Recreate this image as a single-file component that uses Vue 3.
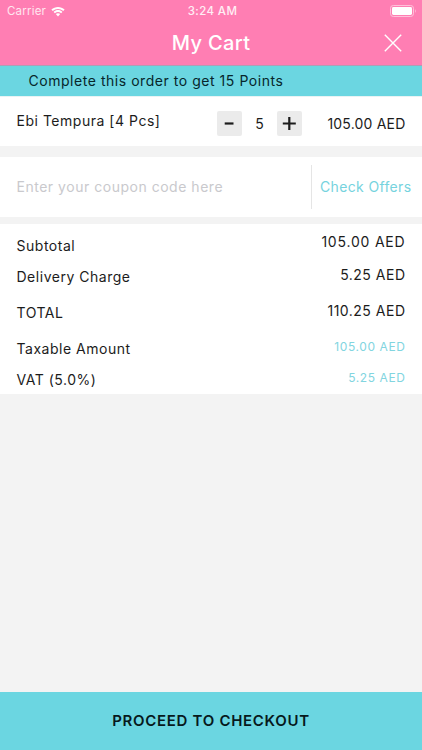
<template>
  <div class="cart">
    <header class="header">
      <div class="status">
        <div class="carrier">
          <span>Carrier</span>
          <svg class="wifi" viewBox="0 0 14 11">
            <path d="M0.4 3.6C4.1 0 9.9 0 13.6 3.6L12.3 5C9.2 2.2 4.8 2.2 1.7 5Z" />
            <path d="M2.6 5.9C5.1 3.5 8.9 3.5 11.4 5.9L10.1 7.3C8.3 5.7 5.7 5.7 3.9 7.3Z" />
            <path d="M4.8 8.1C6.1 7 7.9 7 9.2 8.1L7 10.5Z" />
          </svg>
        </div>
        <span class="time">3:24 AM</span>
        <svg class="battery" viewBox="0 0 27 12">
          <rect x="0.5" y="0.5" width="23" height="11" rx="2.8" class="battery-case" />
          <rect x="2" y="2" width="20" height="8" rx="1.4" fill="#fff" />
          <path d="M25 4.2C26.3 4.8 26.3 7.2 25 7.8Z" class="battery-cap" />
        </svg>
      </div>
      <div class="title-bar">
        <h1 class="title">My Cart</h1>
        <button class="close" aria-label="Close">
          <svg viewBox="0 0 18 18">
            <path d="M0.8 0.8L17.2 17.2M17.2 0.8L0.8 17.2" />
          </svg>
        </button>
      </div>
    </header>

    <div class="points"><span>Complete this order to get 15 Points</span></div>

    <section class="item">
      <span class="item-name">Ebi Tempura [4 Pcs]</span>
      <div class="counter">
        <button class="step" aria-label="Less" @click="decrease">
          <svg viewBox="0 0 25 25"><path d="M7.7 12.5H16.5" /></svg>
        </button>
        <span class="count">{{ count }}</span>
        <button class="step" aria-label="More" @click="count++">
          <svg viewBox="0 0 25 25"><path d="M5.8 12.5H18.8M12.3 6V19" /></svg>
        </button>
      </div>
      <span class="item-price">{{ money(subtotal) }}</span>
    </section>

    <section class="coupon">
      <input v-model="coupon" class="coupon-input" placeholder="Enter your coupon code here" />
      <button class="offers"><span>Check Offers</span></button>
    </section>

    <section class="summary">
      <div v-for="row in rows" :key="row.name" class="row" :class="row.name">
        <span class="label">{{ row.label }}</span>
        <span class="amount">{{ money(row.value) }}</span>
      </div>
    </section>

    <button class="checkout"><span>PROCEED TO CHECKOUT</span></button>
  </div>
</template>

<script setup>
  import { computed, ref } from 'vue'

  const price = 21
  const delivery = 5.25
  const count = ref(5)
  const coupon = ref('')

  const subtotal = computed(() => price * count.value)

  const rows = computed(() => [
    { name: 'subtotal', label: 'Subtotal', value: subtotal.value },
    { name: 'delivery', label: 'Delivery Charge', value: delivery },
    { name: 'total', label: 'TOTAL', value: subtotal.value + delivery },
    { name: 'taxable', label: 'Taxable Amount', value: subtotal.value },
    { name: 'vat', label: 'VAT (5.0%)', value: subtotal.value * 0.05 },
  ])

  function money(value) {
    return value.toFixed(2) + ' AED'
  }

  function decrease() {
    if (count.value > 1) count.value--
  }
</script>

<style>
  body {
    background-color: #f3f3f3;
  }
</style>

<style scoped>
  .cart {
    display: flex;
    flex-direction: column;
    height: 100vh;
    background-color: #f3f3f3;
    font-family: Inter, "Liberation Sans", sans-serif;
    font-size: 14px;
    line-height: 20px;
    color: #1c1c1c;
    white-space: nowrap;
    overflow: hidden;
  }

  button {
    padding: 0;
    border: none;
    background: none;
    font: inherit;
    color: inherit;
    cursor: pointer;
  }

  svg {
    display: block;
  }

  .header {
    box-sizing: border-box;
    height: 66px;
    background-color: #ff7eb3;
    border-bottom: 1px solid #b09db5;
    color: #fff;
  }

  .status {
    display: grid;
    grid-template-columns: 1fr auto 1fr;
    align-items: center;
    height: 22px;
    padding: 0 5px 0 7px;
    font-size: 11.5px;
  }

  .carrier {
    display: flex;
    align-items: center;
    gap: 5px;
    color: #ffe6f0;
    letter-spacing: 0.2px;
  }

  .wifi {
    width: 14px;
    height: 11px;
    fill: #fff;
  }

  .time {
    margin-left: 1px;
    font-weight: 500;
    letter-spacing: 0.4px;
    color: #ffeef5;
  }

  .battery {
    justify-self: end;
    width: 27px;
    height: 12px;
  }

  .battery-case {
    fill: none;
    stroke: #ffc0da;
  }

  .battery-cap {
    fill: #ffb3d2;
  }

  .title-bar {
    display: grid;
    grid-template-columns: 1fr auto 1fr;
    align-items: center;
    height: 41px;
  }

  .title {
    grid-column: 2;
    margin: 0;
    font-size: 20px;
    font-weight: 550;
    letter-spacing: 0.35px;
  }

  .close {
    justify-self: end;
    width: 18px;
    height: 18px;
    margin-right: 20px;
  }

  .close path {
    fill: none;
    stroke: #fff;
    stroke-width: 1.4;
  }

  .points {
    height: 30px;
    padding-left: 28.5px;
    background-color: #6bd6e1;
    line-height: 30px;
    letter-spacing: 0.54px;
    color: #07262b;
  }

  .item {
    box-sizing: border-box;
    display: flex;
    height: 50px;
    padding: 0 16.5px;
    border-top: 1px solid #e9f3f4;
    background-color: #fff;
  }

  .item-name {
    width: 200.5px;
    margin-top: 14px;
    letter-spacing: 0.52px;
  }

  .counter {
    display: flex;
    align-items: center;
    width: 85px;
    height: 25px;
    margin-top: 14px;
  }

  .step {
    width: 25px;
    height: 25px;
    border-radius: 2px;
    background-color: #ebebeb;
  }

  .step path {
    fill: none;
    stroke: #1c1c1c;
    stroke-width: 2.2;
  }

  .count {
    flex: 1;
    text-align: center;
  }

  .item-price {
    margin: 17px 0 0 auto;
    letter-spacing: 0.2px;
  }

  .coupon {
    display: flex;
    align-items: center;
    height: 60px;
    margin-top: 11px;
    background-color: #fff;
  }

  .coupon-input {
    box-sizing: border-box;
    width: 311px;
    padding: 0 0 1px 16.5px;
    border: none;
    outline: none;
    background: none;
    font: inherit;
    letter-spacing: 0.52px;
  }

  .coupon-input::placeholder {
    color: #c9c9cd;
    opacity: 1;
  }

  .offers {
    flex: 1;
    height: 44px;
    border-left: 1px solid #e5e5e5;
    padding: 0 0 1px 8px;
    text-align: left;
    letter-spacing: 0.35px;
    color: #76d3de;
  }

  .summary {
    box-sizing: border-box;
    height: 170px;
    margin-top: 7px;
    padding: 12px 16.5px 0;
    background-color: #fff;
  }

  .row {
    display: flex;
    justify-content: space-between;
    align-items: flex-start;
    height: 36px;
  }

  .subtotal,
  .taxable {
    height: 31px;
  }

  .vat {
    height: 24px;
  }

  .label {
    letter-spacing: 0.52px;
  }

  .amount {
    margin-top: -2px;
    letter-spacing: 0.5px;
  }

  .subtotal .amount {
    margin-top: -4px;
    letter-spacing: 0.8px;
  }

  .taxable .amount,
  .vat .amount {
    font-size: 12px;
    letter-spacing: 0.6px;
    color: #82d5df;
  }

  .checkout {
    height: 58px;
    margin-top: auto;
    background-color: #6bd6e1;
    font-size: 15px;
    font-weight: 600;
    letter-spacing: 0.7px;
    color: #07191c;
  }
</style>
